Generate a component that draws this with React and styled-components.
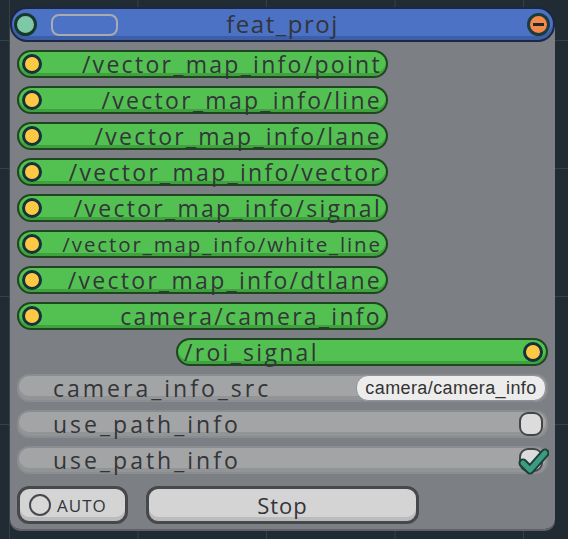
import React from "react";
import styled, { createGlobalStyle } from "styled-components";

const GlobalStyle = createGlobalStyle`
  html, body {
    margin: 0;
    padding: 0;
  }
  body {
    width: 568px;
    height: 539px;
    overflow: hidden;
    background-color: #212b34;
    background-image:
      linear-gradient(to right, #34404a 1px, transparent 1px),
      linear-gradient(to bottom, #34404a 1px, transparent 1px);
    background-size: 128.5px 128px;
    background-position: 9px 40px;
    font-family: "Open Sans", "Noto Sans", sans-serif;
  }
`;

const Node = styled.div`
  width: 545px;
  margin: 7px 0 0 10px;
  background: linear-gradient(to bottom, transparent 18px, #7c7f83 18px);
  border-radius: 0 0 10px 10px;
  box-shadow: 0 2px 0 #5f6266;
`;

const Header = styled.div`
  height: 31px;
  display: flex;
  align-items: center;
  padding: 0 3px 0 2px;
  background: #4b72c5;
  border: 2px solid #1b2744;
  border-radius: 17px;
  box-shadow: inset 0 -4px 0 #3c5fa8;
  box-sizing: content-box;
  position: relative;
`;

const Title = styled.div`
  position: absolute;
  left: 0;
  right: 0;
  top: 0;
  text-align: center;
  font-size: 24px;
  letter-spacing: 1.5px;
  line-height: 29px;
  color: #333538;
  pointer-events: none;
`;

const Dot = styled.span`
  flex: none;
  width: ${(p) => p.$size || 20}px;
  height: ${(p) => p.$size || 20}px;
  border-radius: 50%;
  box-sizing: border-box;
  border: 3px solid ${(p) => p.$ring || "#15323a"};
  background: ${(p) => p.$fill || "#fdc843"};
  display: flex;
  align-items: center;
  justify-content: center;
`;

const Dash = styled.span`
  width: 11px;
  height: 3px;
  background: #1d2a2a;
`;

const NameSlot = styled.span`
  margin-left: 14px;
  width: 63px;
  height: 18px;
  border: 2px solid #a9abb0;
  border-radius: 8px;
`;

const Spacer = styled.span`
  flex: 1;
`;

const Body = styled.div`
  display: flex;
  flex-direction: column;
  gap: 8px;
  padding: 8px 7px 5px;
`;

const Port = styled.div`
  align-self: ${(p) => (p.$right ? "flex-end" : "flex-start")};
  width: ${(p) => p.$width}px;
  height: 28px;
  box-sizing: border-box;
  display: flex;
  align-items: center;
  flex-direction: ${(p) => (p.$right ? "row-reverse" : "row")};
  padding: 0 3px;
  background: #52c152;
  border: 2px solid #1e461f;
  border-radius: 14px;
  box-shadow: inset 0 -3px 0 #3fa23f;
`;

const PortLabel = styled.span`
  flex: 1;
  text-align: ${(p) => (p.$right ? "left" : "right")};
  padding: ${(p) => (p.$right ? "0 0 0 3px" : "0 1px 0 0")};
  font-size: ${(p) => p.$size || 23}px;
  letter-spacing: ${(p) => p.$spacing || 2.3}px;
  line-height: 26px;
  color: #333538;
  white-space: nowrap;
`;

const Field = styled.div`
  height: 28px;
  box-sizing: border-box;
  display: flex;
  align-items: center;
  padding: 0 2px 0 34px;
  background: #a3a4a6;
  border: 2px solid #8b8c8f;
  border-radius: 12px;
  box-shadow: inset 0 -4px 0 #939496;
`;

const FieldLabel = styled.span`
  flex: 1;
  font-size: 23px;
  letter-spacing: 3px;
  line-height: 26px;
  color: #333538;
  white-space: nowrap;
`;

const TextBox = styled.span`
  width: 190px;
  height: 26px;
  box-sizing: border-box;
  margin-right: -2px;
  display: flex;
  align-items: center;
  justify-content: center;
  background: #ececec;
  border-radius: 12px;
  border: 1px solid #8f9093;
  font-family: "Liberation Sans", Arial, sans-serif;
  font-size: 18px;
  letter-spacing: 0.4px;
  color: #333;
`;

const Check = styled.span`
  position: relative;
  width: 24px;
  height: 24px;
  box-sizing: border-box;
  margin-right: 1px;
  background: #dcdcdc;
  border: 2px solid #444648;
  border-radius: 9px;
`;

const Tick = styled.svg`
  position: absolute;
  left: -6px;
  top: -8px;
`;

const Buttons = styled.div`
  display: flex;
  gap: 18px;
  margin-top: 4px;
`;

const Button = styled.button`
  width: ${(p) => p.$width}px;
  height: 38px;
  box-sizing: border-box;
  display: flex;
  align-items: center;
  justify-content: ${(p) => (p.$center ? "center" : "flex-start")};
  gap: 6px;
  padding: 0 9px;
  background: #d4d4d4;
  border: 3px solid #46484b;
  border-radius: 12px;
  box-shadow: inset 0 -4px 0 #bcbcbc;
  font-family: "Open Sans", "Noto Sans", sans-serif;
  font-size: ${(p) => p.$size}px;
  letter-spacing: 1px;
  color: #333538;
`;

const Radio = styled.span`
  width: 22px;
  height: 22px;
  box-sizing: border-box;
  border-radius: 50%;
  border: 2px solid #46484b;
  background: #d8d8d8;
`;

const ports = [
  { name: "/vector_map_info/point" },
  { name: "/vector_map_info/line" },
  { name: "/vector_map_info/lane" },
  { name: "/vector_map_info/vector" },
  { name: "/vector_map_info/signal" },
  { name: "/vector_map_info/white_line", size: 20.5, spacing: 1.9 },
  { name: "/vector_map_info/dtlane" },
  { name: "camera/camera_info" },
];

export default function App() {
  return (
    <>
      <GlobalStyle />
      <Node>
        <Header>
          <Dot $size={23} $fill="#7ec8a8" $ring="#17392d" />
          <NameSlot />
          <Title>feat_proj</Title>
          <Spacer />
          <Dot $size={23} $fill="#f5884b" $ring="#1d3a3c">
            <Dash />
          </Dot>
        </Header>
        <Body>
          {ports.map((p) => (
            <Port key={p.name} $width={371}>
              <Dot />
              <PortLabel $size={p.size} $spacing={p.spacing}>
                {p.name}
              </PortLabel>
            </Port>
          ))}
          <Port $right $width={372}>
            <Dot />
            <PortLabel $right>/roi_signal</PortLabel>
          </Port>
          <Field>
            <FieldLabel>camera_info_src</FieldLabel>
            <TextBox>camera/camera_info</TextBox>
          </Field>
          <Field>
            <FieldLabel>use_path_info</FieldLabel>
            <Check />
          </Field>
          <Field>
            <FieldLabel>use_path_info</FieldLabel>
            <Check>
              <Tick width="34" height="34" viewBox="0 0 34 34">
                <polyline
                  points="8,21 15,28 30,11"
                  fill="none"
                  stroke="#1d3f37"
                  strokeWidth="9"
                  strokeLinecap="round"
                  strokeLinejoin="round"
                />
                <polyline
                  points="8,21 15,28 30,11"
                  fill="none"
                  stroke="#3c9c82"
                  strokeWidth="5"
                  strokeLinecap="round"
                  strokeLinejoin="round"
                />
              </Tick>
            </Check>
          </Field>
          <Buttons>
            <Button $width={111} $size={17}>
              <Radio />
              AUTO
            </Button>
            <Button $width={273} $size={22} $center>
              Stop
            </Button>
          </Buttons>
        </Body>
      </Node>
    </>
  );
}
